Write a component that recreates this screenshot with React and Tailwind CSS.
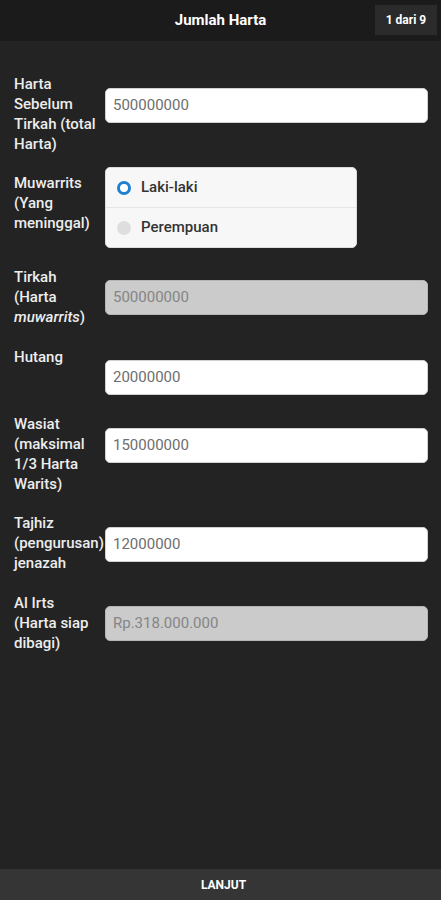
import React from "react";

const font = { fontFamily: "Roboto, 'Noto Sans', sans-serif" };

function Label({ children, className = "" }) {
  return (
    <div className={`w-[85px] shrink-0 text-[15px] leading-[20px] font-medium text-[#ededed] ${className}`}>
      {children}
    </div>
  );
}

function Field({ value, disabled, className = "" }) {
  return (
    <div
      className={`ml-[6px] flex-1 h-[35px] rounded-[5px] border flex items-center pl-[7px] text-[15px] ${
        disabled
          ? "bg-[#cbcbcb] border-[#b5b5b5] text-[#858585]"
          : "bg-white border-[#d0d0d0] text-[#6e6e6e]"
      } ${className}`}
    >
      {value}
    </div>
  );
}

export default function App() {
  return (
    <div style={font} className="w-[441px] h-[900px] bg-[#232323] flex flex-col overflow-hidden">
      <div className="h-[41px] bg-[#1b1b1b] relative flex items-center justify-center shrink-0">
        <span className="text-white font-bold text-[15px]">Jumlah Harta</span>
        <div className="absolute right-[4px] top-[5px] w-[62px] h-[30px] bg-[#2b2b2b] flex items-center justify-center text-white font-bold text-[12px]">
          1 dari 9
        </div>
      </div>

      <div className="flex-1 flex flex-col pt-[33px] pl-[14px] pr-[13px]">
        <div className="flex items-start">
          <Label>Harta Sebelum Tirkah (total Harta)</Label>
          <Field value="500000000" className="mt-[14px]" />
        </div>

        <div className="flex items-start mt-[13px]">
          <Label className="pt-[6px]">Muwarrits (Yang meninggal)</Label>
          <div className="ml-[6px] w-[252px] h-[81px] rounded-[5px] bg-[#f7f7f7] border border-[#dcdcdc] flex flex-col">
            <div className="h-[40px] flex items-center border-b border-[#e6e6e6] pl-[11px]">
              <div className="w-[14px] h-[14px] rounded-full border-[3.5px] border-[#1f7fd1] bg-white" />
              <span className="ml-[10px] text-[15px] font-medium text-[#333]">Laki-laki</span>
            </div>
            <div className="flex-1 flex items-center pl-[11px]">
              <div className="w-[14px] h-[14px] rounded-full bg-[#dedede]" />
              <span className="ml-[10px] text-[15px] font-medium text-[#333]">Perempuan</span>
            </div>
          </div>
        </div>

        <div className="flex items-start mt-[19px]">
          <Label>
            Tirkah (Harta <i>muwarrits</i>)
          </Label>
          <Field value="500000000" disabled className="mt-[13px]" />
        </div>

        <div className="flex items-start mt-[20px]">
          <Label>Hutang</Label>
          <Field value="20000000" className="mt-[13px]" />
        </div>

        <div className="flex items-start mt-[19px]">
          <Label>Wasiat (maksimal 1/3 Harta Warits)</Label>
          <Field value="150000000" className="mt-[14px]" />
        </div>

        <div className="flex items-start mt-[19px]">
          <Label>Tajhiz (pengurusan) jenazah</Label>
          <Field value="12000000" className="mt-[14px]" />
        </div>

        <div className="flex items-start mt-[20px]">
          <Label>Al Irts (Harta siap dibagi)</Label>
          <Field value="Rp.318.000.000" disabled className="mt-[13px]" />
        </div>
      </div>

      <div className="h-[31px] bg-[#353535] flex items-center justify-center shrink-0">
        <span className="text-white font-bold text-[12px] ml-[6px]">LANJUT</span>
      </div>
    </div>
  );
}
